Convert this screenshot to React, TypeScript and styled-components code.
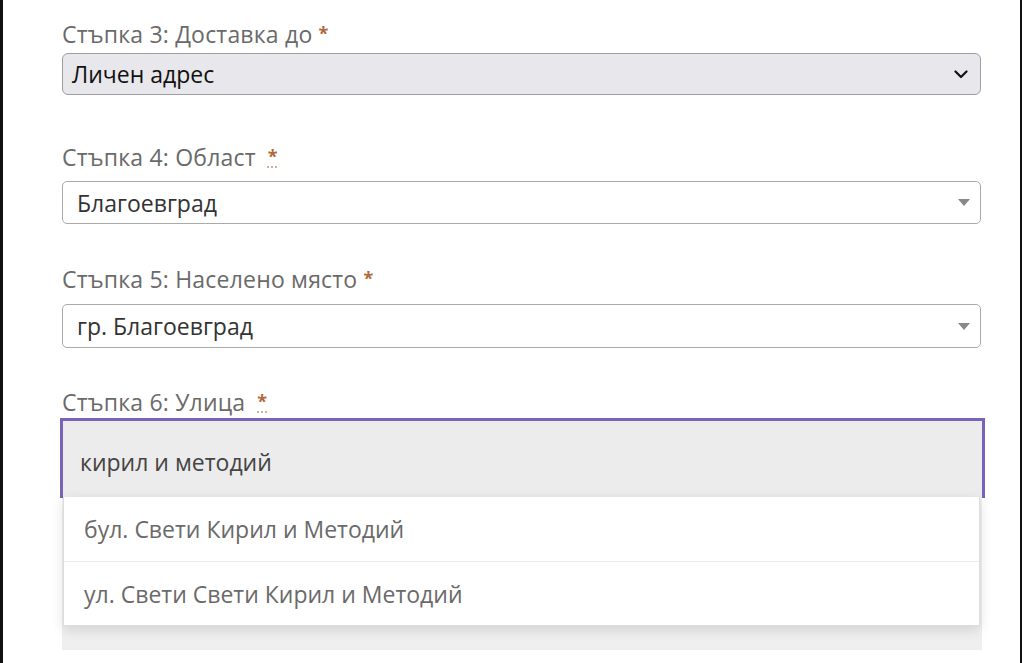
import React from 'react'
import styled, { createGlobalStyle } from 'styled-components'

const GlobalStyle = createGlobalStyle`
  html, body {
    margin: 0;
    padding: 0;
    background: #fff;
  }
  body {
    font-family: 'Open Sans', 'Noto Sans', sans-serif;
  }
`

const Frame = styled.div`
  display: flex;
  width: 1024px;
  height: 663px;
  overflow: hidden;
  background: #fff;
`

const EdgeBar = styled.div<{ $w: number }>`
  flex: 0 0 ${({ $w }) => $w}px;
  background: #111;
`

const Page = styled.main`
  flex: 1;
  padding: 19px 0 0 59px;
`

const Spacer = styled.div`
  flex: 0 0 2px;
`

const Form = styled.div`
  width: 919px;
`

const Field = styled.div<{ $gap: number; $top: number }>`
  display: flex;
  flex-direction: column;
  gap: ${({ $gap }) => $gap}px;
  margin-top: ${({ $top }) => $top}px;
`

const Label = styled.label`
  display: block;
  height: 30px;
  font-size: 23px;
  line-height: 30px;
  color: #6a6a6a;
  letter-spacing: 0.2px;
  white-space: nowrap;
`

const Required = styled.abbr<{ $dotted?: boolean }>`
  color: #b0683a;
  font-weight: 700;
  font-size: 18px;
  line-height: 1;
  vertical-align: 3px;
  margin-left: ${({ $dotted }) => ($dotted ? '12px' : '6px')};
  text-decoration: ${({ $dotted }) => ($dotted ? 'underline dotted #c9a790' : 'none')};
  text-underline-offset: 4px;
`

const NativeSelect = styled.div`
  display: flex;
  align-items: center;
  justify-content: space-between;
  box-sizing: border-box;
  height: 42px;
  padding: 0 12px 0 9px;
  background: #e8e7ec;
  border: 1px solid #9e9ea3;
  border-radius: 6px;
  font-size: 23px;
  color: #111;
`

const ChosenSelect = styled.div<{ $h: number }>`
  display: flex;
  align-items: center;
  justify-content: space-between;
  box-sizing: border-box;
  height: ${({ $h }) => $h}px;
  padding: 0 10px 0 14px;
  background: #fff;
  border: 1px solid #aaa;
  border-radius: 5px;
  font-size: 23px;
  color: #333;
`

const Triangle = styled.span`
  width: 0;
  height: 0;
  border-left: 6px solid transparent;
  border-right: 6px solid transparent;
  border-top: 7px solid #888;
`

const Autocomplete = styled.div`
  position: relative;
  margin-left: -2px;
  width: 925px;
`

const SearchInput = styled.div`
  box-sizing: border-box;
  height: 80px;
  display: flex;
  align-items: center;
  padding: 4px 0 0 17px;
  background: #ececec;
  border: 3px solid #7a62b6;
  border-bottom: none;
  font-size: 23px;
  color: #444;
`

const Backdrop = styled.div`
  height: 152px;
  margin: 0 3px 0 2px;
  background: #efefef;
`

const Menu = styled.ul`
  position: absolute;
  top: 79px;
  left: 3px;
  right: 5px;
  margin: 0;
  padding: 0;
  list-style: none;
  background: #fff;
  border: 1px solid #ddd;
  border-top: none;
  box-shadow: 0 4px 12px rgba(0, 0, 0, 0.12);
`

const MenuItem = styled.li`
  height: 64px;
  display: flex;
  align-items: center;
  padding-left: 20px;
  font-size: 23px;
  color: #6a6a6a;

  & + & {
    height: 63px;
    border-top: 1px solid #eaeaea;
  }
`

const Chevron = () => (
  <svg width="14" height="9" viewBox="0 0 14 9" fill="none">
    <path d="M1.5 1.5 L7 7 L12.5 1.5" stroke="#111" strokeWidth="2.2" strokeLinecap="round" strokeLinejoin="round" />
  </svg>
)

export default function App() {
  return (
    <>
      <GlobalStyle />
      <Frame>
        <EdgeBar $w={3} />
        <Page>
          <Form>
            <Field $gap={4} $top={0}>
              <Label>
                Стъпка 3: Доставка до<Required>*</Required>
              </Label>
              <NativeSelect>
                <span>Личен адрес</span>
                <Chevron />
              </NativeSelect>
            </Field>
            <Field $gap={9} $top={47}>
              <Label>
                Стъпка 4: Област<Required $dotted>*</Required>
              </Label>
              <ChosenSelect $h={43}>
                <span>Благоевград</span>
                <Triangle />
              </ChosenSelect>
            </Field>
            <Field $gap={10} $top={40}>
              <Label>
                Стъпка 5: Населено място<Required>*</Required>
              </Label>
              <ChosenSelect $h={44}>
                <span>гр. Благоевград</span>
                <Triangle />
              </ChosenSelect>
            </Field>
            <Field $gap={1} $top={39}>
              <Label>
                Стъпка 6: Улица<Required $dotted>*</Required>
              </Label>
              <Autocomplete>
                <SearchInput>кирил и методий</SearchInput>
                <Backdrop />
                <Menu>
                  <MenuItem>бул. Свети Кирил и Методий</MenuItem>
                  <MenuItem>ул. Свети Свети Кирил и Методий</MenuItem>
                </Menu>
              </Autocomplete>
            </Field>
          </Form>
        </Page>
        <EdgeBar $w={2} />
        <Spacer />
      </Frame>
    </>
  )
}
